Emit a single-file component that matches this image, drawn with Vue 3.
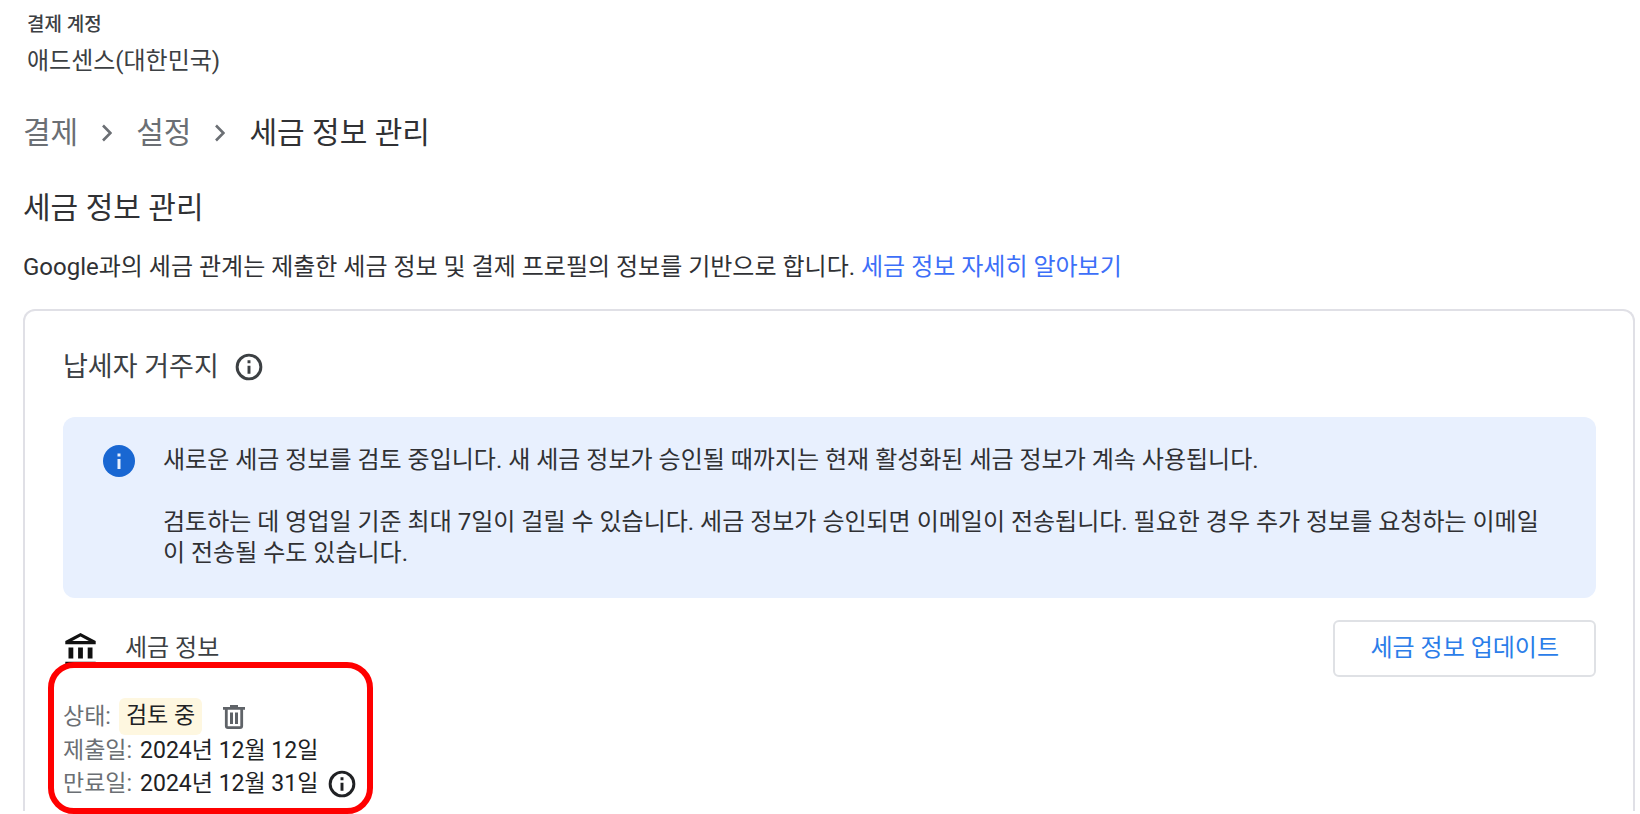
<script setup>
    import { ref } from 'vue';

    const crumbs = ref([
        {label: '결제', href: '#payments'},
        {label: '설정', href: '#settings'},
    ])

    const dates = ref([
        {label: '제출일:', value: '2024년 12월 12일', info: false},
        {label: '만료일:', value: '2024년 12월 31일', info: true},
    ])
</script>

<template>
    <div class="page">
        <header class="account">
            <p class="accountLabel">결제 계정</p>
            <p class="accountName">애드센스(대한민국)</p>
        </header>

        <nav class="crumbs">
            <template v-for="crumb in crumbs" :key="crumb.href">
                <a :href="crumb.href">{{crumb.label}}</a>
                <svg class="chevron" viewBox="0 0 10 18">
                    <path fill="none" stroke="currentColor" stroke-width="2.6" d="M1 1.5L8.4 9L1 16.5" />
                </svg>
            </template>
            <span>세금 정보 관리</span>
        </nav>

        <main>
            <h1>세금 정보 관리</h1>
            <p class="intro">
                Google과의 세금 관계는 제출한 세금 정보 및 결제 프로필의 정보를 기반으로 합니다.
                <a href="#learn-more">세금 정보 자세히 알아보기</a>
            </p>

            <section class="card">
                <div class="residence">
                    <h2>납세자 거주지</h2>
                    <button class="iconButton" aria-label="납세자 거주지 도움말">
                        <svg class="infoIcon" viewBox="0 0 24 24">
                            <circle cx="12" cy="12" r="8.9" fill="none" stroke="currentColor" stroke-width="2.2" />
                            <path fill="currentColor" d="M10.900 7h2.200v2.200h-2.200zM10.900 11h2.200v6h-2.200z" />
                        </svg>
                    </button>
                </div>

                <div class="notice">
                    <svg class="noticeIcon" viewBox="0 0 32 32">
                        <circle cx="16" cy="16" r="16" fill="#1967d2" />
                        <path fill="#e8f0fe" d="M14.5 8.5h3v3h-3zM14.5 14h3v10h-3z" />
                    </svg>
                    <div class="noticeText">
                        <p>새로운 세금 정보를 검토 중입니다. 새 세금 정보가 승인될 때까지는 현재 활성화된 세금 정보가 계속 사용됩니다.</p>
                        <p>검토하는 데 영업일 기준 최대 7일이 걸릴 수 있습니다. 세금 정보가 승인되면 이메일이 전송됩니다. 필요한 경우 추가 정보를 요청하는 이메일이 전송될 수도 있습니다.</p>
                    </div>
                </div>

                <div class="taxHeader">
                    <svg class="bankIcon" viewBox="2 1 19 20">
                        <path fill="currentColor" d="M7 10H4v7h3v-7zm6 0h-3v7h3v-7zm8 9H2v2h19v-2zm-2-9h-3v7h3v-7zm-7.500-6.740L16.710 6H6.290l5.210-2.740m0-2.260L2 6v2h19V6l-9.500-5z" />
                    </svg>
                    <h3>세금 정보</h3>
                    <button class="update">세금 정보 업데이트</button>
                </div>

                <div class="status">
                    <div class="row statusRow">
                        <span class="key">상태:</span>
                        <span class="badge">검토 중</span>
                        <button class="iconButton trash" aria-label="삭제">
                            <svg class="trashIcon" viewBox="0 0 22 24">
                                <path fill="none" stroke="currentColor" stroke-width="2.800" d="M0 3.300H22M3.300 3.300V21q0 1.600 1.700 1.600H17q1.700 0 1.700-1.600V3.300" />
                                <path fill="currentColor" d="M7 0h8v3H7zM7 7.500h3v11.500H7zM12 7.500h3v11.500H12z" />
                            </svg>
                        </button>
                    </div>
                    <div class="row" v-for="date in dates" :key="date.label">
                        <span class="key">{{date.label}}</span>
                        <span>{{date.value}}</span>
                        <button class="iconButton" v-if="date.info" aria-label="만료일 도움말">
                            <svg class="infoIcon" viewBox="0 0 24 24">
                                <circle cx="12" cy="12" r="8.9" fill="none" stroke="currentColor" stroke-width="2.2" />
                                <path fill="currentColor" d="M10.900 7h2.200v2.200h-2.200zM10.900 11h2.200v6h-2.200z" />
                            </svg>
                        </button>
                    </div>
                    <div class="marker"></div>
                </div>
            </section>
        </main>
    </div>
</template>

<style>
    body {
        background-color: white;
    }
</style>

<style scoped>
    .page {
        padding: 9px 5px 3px 23px;
        font-family: Roboto, "Noto Sans CJK KR", sans-serif;
        font-size: 24px;
        line-height: 31px;
        color: #3c4043;
    }

    p, h1, h2, h3 {
        margin: 0;
        font-weight: 400;
    }

    a {
        text-decoration: none;
    }

    button {
        font: inherit;
        cursor: pointer;
    }

    svg {
        display: block;
        flex: none;
    }

    .account {
        padding-left: 4px;
    }

    .accountLabel {
        font-size: 19px;
        font-weight: 500;
    }

    .accountName {
        margin-top: 6px;
    }

    .crumbs {
        display: flex;
        align-items: center;
        gap: 24px;
        margin-top: 36px;
        font-size: 30px;
        line-height: 40px;
        color: #303134;
    }

    .crumbs a, .chevron {
        color: #6b6f74;
    }

    .chevron {
        width: 10px;
        height: 18px;
    }

    h1 {
        margin-top: 35px;
        font-size: 30px;
        line-height: 40px;
        color: #303134;
    }

    .intro {
        margin-top: 24px;
        color: #303134;
    }

    .intro a {
        color: #3d6ff8;
    }

    .card {
        margin-top: 26px;
        padding: 40px 37px 11px 38px;
        border: 2px solid #e0e0e6;
        border-bottom: none;
        border-radius: 12px 12px 0 0;
    }

    .residence {
        display: flex;
        align-items: center;
        gap: 14px;
    }

    h2 {
        font-size: 27px;
    }

    h3 {
        font-size: 24px;
    }

    .iconButton {
        padding: 0;
        border: none;
        background: none;
        color: inherit;
    }

    .infoIcon {
        width: 32px;
        height: 32px;
    }

    .notice {
        display: flex;
        gap: 28px;
        margin-top: 34px;
        padding: 28px 40px 29px;
        border-radius: 12px;
        background-color: #e8f0fe;
        color: #303134;
    }

    .noticeIcon {
        width: 32px;
        height: 32px;
    }

    .noticeText {
        display: flex;
        flex-direction: column;
        gap: 31px;
    }

    .taxHeader {
        display: flex;
        align-items: center;
        margin-top: 22px;
    }

    .bankIcon {
        width: 31px;
        height: 32px;
        margin: 0 29px 0 2px;
        color: #111111;
    }

    .update {
        margin-left: auto;
        padding: 11px 35px;
        border: 2px solid #dfe1e5;
        border-radius: 6px;
        background-color: white;
        color: #2b7de9;
        line-height: 31px;
    }

    .status {
        position: relative;
        margin-top: 22px;
        font-size: 23px;
        color: #202124;
    }

    .row {
        display: flex;
        align-items: center;
        gap: 8px;
        height: 33px;
    }

    .statusRow {
        height: 35px;
    }

    .key {
        color: #6b6f74;
    }

    .badge {
        padding: 2px 7px 4px;
        border-radius: 6px;
        background-color: #fef7e0;
    }

    .trash {
        margin-left: 13px;
        color: #5f6368;
    }

    .trashIcon {
        width: 22px;
        height: 24px;
    }

    /* red outline drawn over the status block */
    .marker {
        position: absolute;
        top: -37px;
        left: -15px;
        width: 313px;
        height: 140px;
        border: 6px solid #ff0000;
        border-radius: 26px;
        pointer-events: none;
    }
</style>
